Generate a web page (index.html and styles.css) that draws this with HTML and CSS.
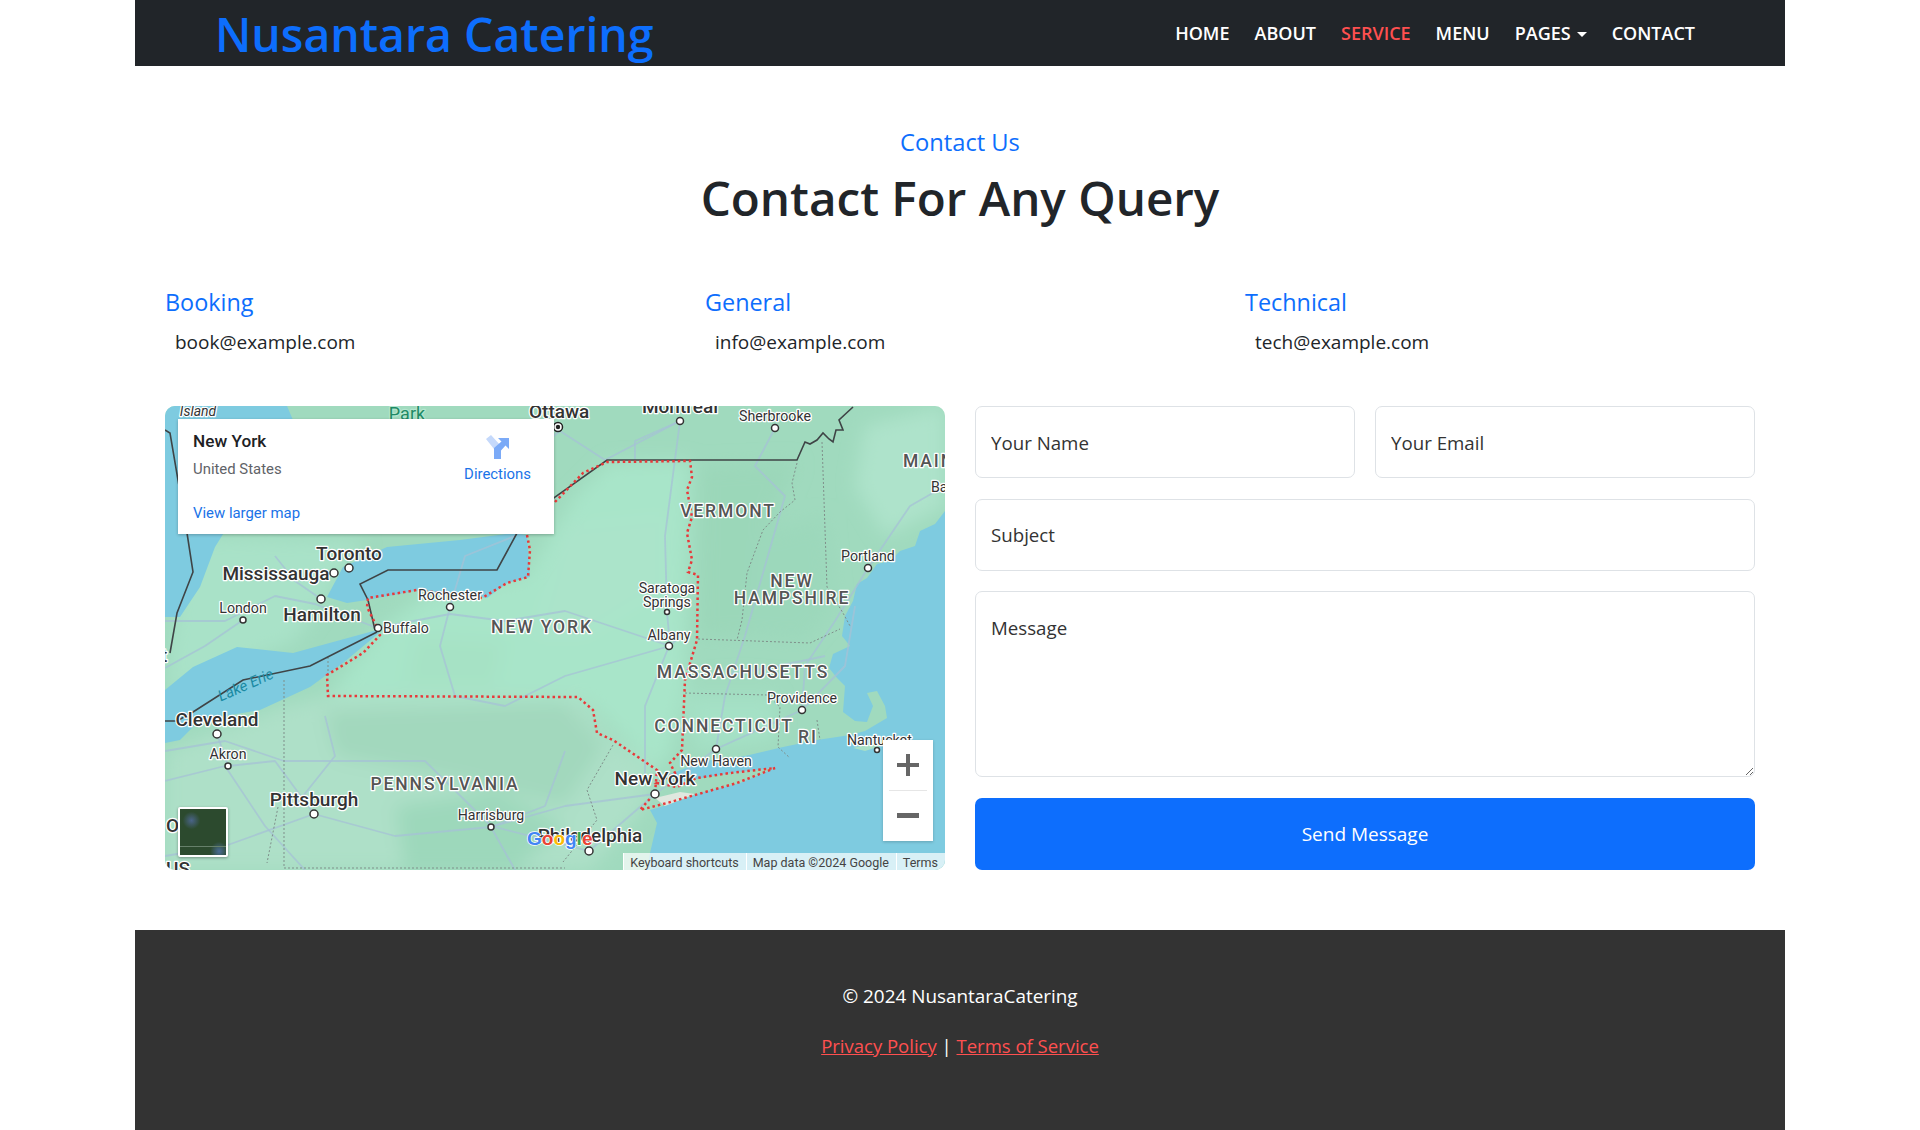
FILE: index.html
```html
<!DOCTYPE html>
<html lang="en">
<head>
    <meta charset="UTF-8">
    <meta name="viewport" content="width=device-width, initial-scale=1.0">
    <title>Nusantara Catering</title>
    <link rel="stylesheet" href="styles.css">
</head>
<body>
    <div class="page">
        <nav class="navbar">
            <a class="brand" href="#">Nusantara Catering</a>
            <ul class="nav-list">
                <li><a href="#">HOME</a></li>
                <li><a href="#">ABOUT</a></li>
                <li><a class="active" href="#">SERVICE</a></li>
                <li><a href="#">MENU</a></li>
                <li><a class="dropdown" href="#">PAGES</a></li>
                <li><a href="#">CONTACT</a></li>
            </ul>
        </nav>

        <main class="contact">
            <p class="eyebrow">Contact Us</p>
            <h1 class="title">Contact For Any Query</h1>

            <div class="info-grid">
                <div>
                    <h2 class="info-label">Booking</h2>
                    <p class="info-mail">book@example.com</p>
                </div>
                <div>
                    <h2 class="info-label">General</h2>
                    <p class="info-mail">info@example.com</p>
                </div>
                <div>
                    <h2 class="info-label">Technical</h2>
                    <p class="info-mail">tech@example.com</p>
                </div>
            </div>

            <div class="contact-row">
                <div class="map">
                    <svg class="map-canvas" width="780" height="464" viewBox="0 0 780 464">
                        <defs>
                            <filter id="soft" x="-10%" y="-10%" width="120%" height="120%">
                                <feGaussianBlur stdDeviation="9"/>
                            </filter>
                        </defs>

                        <!-- land patches -->
                        <rect width="780" height="464" fill="#a0dabe"/>
                        <g filter="url(#soft)">
                            <polygon fill="#a8e5c9" points="163,290 212,226 260,190 360,170 410,90 445,56 525,55 520,280 505,350 490,365 428,300 413,291"/>
                            <polygon fill="#aee0c8" points="0,345 119,300 163,290 413,291 448,334 490,365 480,400 425,464 0,464"/>
                            <polygon fill="#a2d8bd" points="160,305 400,296 440,340 400,400 300,375 170,350"/>
                            <polygon fill="#9dd8bb" points="230,400 330,385 400,420 350,464 240,464"/>
                            <polygon fill="#9bd7b9" points="535,60 632,56 600,130 580,230 533,233"/>
                            <polygon fill="#9cd8bb" points="590,130 660,110 670,200 640,235 580,230"/>
                            <polygon fill="#a9e2c8" points="20,130 200,135 130,235 0,290"/>
                            <polygon fill="#aee3cb" points="700,20 780,0 780,100 720,130 690,80"/>
                            <polygon fill="#a5e1c6" points="520,290 610,290 612,335 530,345"/>
                            <polygon fill="#abe4ca" points="400,120 500,110 500,180 420,230 370,230"/>
                            <polygon fill="#a6e2c5" points="250,230 340,235 330,280 240,280"/>
                        </g>

                        <!-- water -->
                        <g fill="#7ecbe0">
                            <polygon points="0,0 122,0 128,14 140,60 60,125 50,141 35,181 15,211 0,211"/>
                            <polygon points="162,191 178,161 222,141 295,134 348,127 362,129 365,171 342,177 322,192 255,184 202,194 182,197"/>
                            <polygon points="212,224 128,247 72,241 28,261 0,284 0,337 15,334 35,314 95,304 145,281 178,257 214,227"/>
                            <polygon points="780,105 770,118 755,125 750,140 735,145 725,155 712,158 702,172 692,178 688,195 680,210 677,230 685,240 668,248 664,262 672,272 680,280 678,306 690,315 702,316 708,300 702,287 712,285 720,300 722,312 700,325 685,329 652,334 618,341 580,350 540,355 505,368 515,376 572,366 610,362 575,377 535,387 502,399 485,404 492,417 485,447 482,464 780,464"/>
                        </g>
                        <polygon fill="#a8e0c6" points="688,342 716,334 722,338 700,345"/>
                        <polygon fill="#dfe8df" points="490,392 515,386 530,388 500,400"/>

                        <!-- roads -->
                        <g class="roads">
                            <polyline points="0,215 60,215 110,190 150,198 212,222 285,208 340,215 400,205 505,240 520,225"/>
                            <polyline points="0,345 60,335 119,355 260,355 326,420 424,445 490,388"/>
                            <polyline points="149,408 110,355 63,360 52,328"/>
                            <polyline points="149,408 60,440 0,450"/>
                            <polyline points="149,408 230,430 326,421 400,400 490,388"/>
                            <polyline points="285,201 275,240 290,290 340,300 400,270 505,240 502,206 500,130 515,15"/>
                            <polyline points="515,15 440,54 395,25 350,60"/>
                            <polyline points="610,22 590,60 620,90 600,160 580,230 560,290 551,343"/>
                            <polyline points="703,162 670,215 640,260 637,304 551,343 490,388"/>
                            <polyline points="504,240 480,300 480,370"/>
                            <polyline points="0,375 60,360 100,420 140,464"/>
                            <polyline points="326,421 350,464"/>
                            <polyline points="703,162 745,100 780,80"/>
                            <polyline points="560,270 637,255 660,250"/>
                            <polyline points="78,214 40,240 0,262"/>
                            <polyline points="156,193 130,175 110,150"/>
                            <polyline points="285,201 300,150 350,130"/>
                            <polyline points="515,15 470,35 470,54"/>
                            <polyline points="160,310 170,350 130,400"/>
                            <polyline points="400,345 380,400 326,421"/>
                            <polyline points="637,304 680,260 690,200"/>
                        </g>

                        <!-- state lines -->
                        <g class="state-lines">
                            <polyline points="119,274 119,462 400,462"/>
                            <polyline points="163,251 163,269"/>
                            <polyline points="657,36 662,181 678,207 685,220"/>
                            <polyline points="632,57 627,77 630,94 615,106 598,124 582,167 577,214 572,234"/>
                            <polyline points="533,233 645,237 675,223"/>
                            <polyline points="520,287 602,289 615,301 613,341 625,352"/>
                            <polyline points="652,314 655,334"/>
                            <polyline points="448,339 422,384 432,414 398,456"/>
                            <polyline points="113,401 102,457"/>
                        </g>

                        <!-- country border -->
                        <g class="border-line">
                            <polyline points="0,24 5,27 22,127 28,166 12,207 5,247"/>
                            <polyline points="212,226 145,260 78,274 28,306 12,315 0,315"/>
                            <polyline points="210,224 203,194 195,178 223,164 332,164 352,127 390,91 442,54 632,54 640,36 645,38 652,34 658,27 664,33 668,36 671,24 678,24 674,14 688,1"/>
                        </g>

                        <!-- New York state outline -->
                        <polyline class="ny-line" points="362,129 365,144 363,171 342,177 317,192 252,184 203,192 202,201 212,221 215,229 198,247 162,269 163,290 413,291 428,304 432,327 448,334 492,364 490,387 475,404 502,397 572,377 610,362 592,364 565,367 532,372 512,381 492,377 510,367 505,357 517,344 520,274 532,234 533,169 523,166 527,154 522,127 527,111 522,84 527,71 525,55 442,56 418,67 390,96"/>

                        <!-- labels -->
                        <text class="lbl-sea" x="33" y="10">Island</text>
                        <text class="lbl-park" x="242" y="14">Park</text>
                        <text class="lbl-big" x="364" y="12" text-anchor="start">Ottawa</text>
                        <text class="lbl-big" x="515" y="7">Montreal</text>
                        <text class="lbl-small" x="610" y="15">Sherbrooke</text>
                        <text class="lbl-state" x="738" y="61" text-anchor="start">MAINE</text>
                        <text class="lbl-small" x="766" y="86" text-anchor="start">Bangor</text>
                        <text class="lbl-state" x="563" y="111">VERMONT</text>
                        <text class="lbl-small" x="703" y="155">Portland</text>
                        <text class="lbl-state" x="627" y="181">NEW</text>
                        <text class="lbl-state" x="627" y="198">HAMPSHIRE</text>
                        <text class="lbl-small" x="502" y="187">Saratoga</text>
                        <text class="lbl-small" x="502" y="201">Springs</text>
                        <text class="lbl-small" x="504" y="234">Albany</text>
                        <text class="lbl-state" x="578" y="272">MASSACHUSETTS</text>
                        <text class="lbl-small" x="637" y="297">Providence</text>
                        <text class="lbl-state" x="559" y="326">CONNECTICUT</text>
                        <text class="lbl-state" x="643" y="337">RI</text>
                        <text class="lbl-small" x="682" y="339" text-anchor="start">Nantucket</text>
                        <text class="lbl-small" x="551" y="360">New Haven</text>
                        <text class="lbl-big" x="490" y="379">New York</text>
                        <text class="lbl-big" x="425" y="436">Philadelphia</text>
                        <text class="lbl-big" x="184" y="154">Toronto</text>
                        <text class="lbl-big" x="111" y="174">Mississauga</text>
                        <text class="lbl-small" x="78" y="207">London</text>
                        <text class="lbl-big" x="157" y="215">Hamilton</text>
                        <text class="lbl-small" x="218" y="227" text-anchor="start">Buffalo</text>
                        <text class="lbl-small" x="285" y="194">Rochester</text>
                        <text class="lbl-state" x="377" y="227">NEW YORK</text>
                        <text class="lbl-lake" x="81" y="284" transform="rotate(-24 81 280)">Lake Erie</text>
                        <text class="lbl-big" x="52" y="320">Cleveland</text>
                        <text class="lbl-small" x="63" y="353">Akron</text>
                        <text class="lbl-big" x="149" y="400">Pittsburgh</text>
                        <text class="lbl-state" x="280" y="384">PENNSYLVANIA</text>
                        <text class="lbl-small" x="326" y="414">Harrisburg</text>
                        <text class="lbl-big" x="-4" y="256" text-anchor="start">t</text>
                        <text class="lbl-big" x="1" y="426" text-anchor="start">O</text>
                        <text class="lbl-big" x="1" y="469" text-anchor="start">US</text>

                        <!-- city dots -->
                        <g class="dots">
                            <circle cx="515" cy="15" r="3.5"/>
                            <circle cx="610" cy="22" r="3.5"/>
                            <circle cx="703" cy="162" r="3.5"/>
                            <circle cx="502" cy="206" r="2.5"/>
                            <circle cx="504" cy="240" r="3.5"/>
                            <circle cx="637" cy="304" r="3.5"/>
                            <circle cx="712" cy="344" r="2.5"/>
                            <circle cx="551" cy="343" r="3.5"/>
                            <circle cx="490" cy="388" r="4"/>
                            <circle cx="424" cy="445" r="4"/>
                            <circle cx="184" cy="162" r="4"/>
                            <circle cx="169" cy="167" r="4"/>
                            <circle cx="78" cy="214" r="3"/>
                            <circle cx="156" cy="193" r="4"/>
                            <circle cx="213" cy="222" r="3.5"/>
                            <circle cx="285" cy="201" r="3.5"/>
                            <circle cx="52" cy="328" r="4"/>
                            <circle cx="63" cy="360" r="3"/>
                            <circle cx="149" cy="408" r="4"/>
                            <circle cx="326" cy="421" r="3"/>
                        </g>
                        <circle cx="393" cy="21" r="4.5" fill="#fff" stroke="#222" stroke-width="1.5"/>
                        <circle cx="393" cy="21" r="2.2" fill="#222"/>

                        <text class="lbl-google" x="362" y="439"><tspan fill="#4285f4">G</tspan><tspan fill="#ea4335">o</tspan><tspan fill="#fbbc05">o</tspan><tspan fill="#4285f4">g</tspan><tspan fill="#34a853">l</tspan><tspan fill="#ea4335">e</tspan></text>
                    </svg>

                    <div class="map-card">
                        <div>
                            <p class="place-name">New York</p>
                            <p class="place-sub">United States</p>
                            <a class="place-link" href="#">View larger map</a>
                        </div>
                        <a class="directions" href="#">
                            <svg width="24" height="24" viewBox="0 0 24 24">
                                <path fill="#c5d9fb" d="M0 4 L5 0 L15 11 V17 H8 V14 Z"/>
                                <path fill="#7baaf7" d="M8 24 V13 L15.5 6.5 L12 3 H23 V14 L19.5 10.5 L15 15.5 V24 Z"/>
                            </svg>
                            <span>Directions</span>
                        </a>
                    </div>

                    <div class="map-thumb"></div>

                    <div class="zoom-box">
                        <svg width="50" height="50" viewBox="0 0 50 50"><path fill="#666" d="M14 23 H23 V14 H27 V23 H36 V27 H27 V36 H23 V27 H14 Z"/></svg>
                        <div class="zoom-sep"></div>
                        <svg width="50" height="50" viewBox="0 0 50 50"><rect x="14" y="22" width="22" height="5" fill="#666"/></svg>
                    </div>

                    <div class="attribution">
                        <span>Keyboard shortcuts</span>
                        <span>Map data ©2024 Google</span>
                        <span>Terms</span>
                    </div>
                </div>

                <form class="contact-form">
                    <div class="form-pair">
                        <input class="field" type="text" placeholder="Your Name">
                        <input class="field" type="email" placeholder="Your Email">
                    </div>
                    <input class="field" type="text" placeholder="Subject">
                    <textarea class="field field-area" placeholder="Message"></textarea>
                    <button class="send-btn" type="button">Send Message</button>
                </form>
            </div>
        </main>

        <footer class="footer">
            <p>© 2024 NusantaraCatering</p>
            <p class="footer-links"><a href="#">Privacy Policy</a> | <a href="#">Terms of Service</a></p>
        </footer>
    </div>
</body>
</html>
```

FILE: styles.css
```css
* {
    box-sizing: border-box;
}

body {
    margin: 0;
    background: #fff;
    color: #212529;
    font-family: "Open Sans", "Liberation Sans", sans-serif;
    font-size: 18px;
}

p, h1, h2, ul {
    margin: 0;
    padding: 0;
}

a {
    text-decoration: none;
}

.page {
    width: 1650px;
    margin: 0 auto;
}

/* Navbar */
.navbar {
    height: 66px;
    background: #212529;
    display: flex;
    align-items: center;
    justify-content: space-between;
    padding: 0 90px 0 80px;
}

.brand {
    padding-top: 2px;
    color: #0d6efd;
    font-size: 46.4px;
    font-weight: 600;
    line-height: 66px;
    white-space: nowrap;
}

.nav-list {
    list-style: none;
    display: flex;
    gap: 25px;
}

.nav-list a {
    color: #fff;
    font-size: 18px;
    font-weight: 600;
}

.nav-list a.active {
    color: #ff5050;
}

.dropdown::after {
    content: "";
    display: inline-block;
    margin-left: 6px;
    vertical-align: 3px;
    border-top: 5px solid #fff;
    border-left: 5px solid transparent;
    border-right: 5px solid transparent;
}

/* Contact section */
.contact {
    height: 864px;
    padding: 59px 0 0 30px;
}

.eyebrow {
    margin-right: 30px;
    color: #0d6efd;
    font-size: 23.7px;
    line-height: 34px;
    text-align: center;
}

.title {
    margin: 10px 30px 0 0;
    font-size: 47.6px;
    font-weight: 600;
    line-height: 58px;
    text-align: center;
}

.info-grid {
    display: grid;
    grid-template-columns: repeat(3, 540px);
    margin-top: 58px;
}

.info-label {
    color: #0d6efd;
    font-size: 23.4px;
    font-weight: 400;
    line-height: 34px;
}

.info-mail {
    margin-top: 7px;
    padding-left: 10px;
    font-size: 19px;
    line-height: 32px;
}

.contact-row {
    display: grid;
    grid-template-columns: 780px 780px;
    gap: 30px;
    margin-top: 48px;
}

/* Map */
.map {
    position: relative;
    height: 464px;
    overflow: hidden;
    border-radius: 10px;
    font-family: Roboto, "Liberation Sans", sans-serif;
}

.map-canvas {
    display: block;
}

.map-canvas text {
    text-anchor: middle;
    font-family: Roboto, "Liberation Sans", sans-serif;
    paint-order: stroke;
    stroke: #fff;
    stroke-width: 2.5px;
    stroke-linejoin: round;
    fill: #333;
}

.map-canvas text[text-anchor="start"] {
    text-anchor: start;
}

.map-canvas .lbl-big {
    font-size: 19px;
    font-weight: 500;
}

.map-canvas .lbl-small {
    font-size: 14.2px;
    font-weight: 400;
}

.map-canvas .lbl-state {
    font-size: 17.5px;
    font-weight: 500;
    letter-spacing: 1.9px;
    fill: #555;
}

.map-canvas .lbl-sea {
    font-size: 14px;
    font-style: italic;
}

.map-canvas .lbl-park {
    font-size: 18px;
    fill: #1f8a66;
    stroke: #b4e6cf;
}

.map-canvas .lbl-lake {
    font-size: 15px;
    font-style: italic;
    fill: #1b8aa3;
    stroke: none;
}

.map-canvas .lbl-google {
    font-family: "Liberation Sans", sans-serif;
    font-size: 19px;
    font-weight: 700;
    text-anchor: start;
    stroke-width: 1.5px;
}

.roads polyline {
    fill: none;
    stroke: #a5c2d6;
    stroke-width: 1.8;
    stroke-linejoin: round;
    stroke-opacity: 0.75;
}

.state-lines polyline {
    fill: none;
    stroke: #7f8f8a;
    stroke-width: 1;
    stroke-dasharray: 2 2;
}

.border-line polyline {
    fill: none;
    stroke: #3f4446;
    stroke-width: 1.6;
}

.ny-line {
    fill: none;
    stroke: #e8393a;
    stroke-width: 2.5;
    stroke-dasharray: 2.5 3;
}

.dots circle {
    fill: #fff;
    stroke: #333;
    stroke-width: 1.5;
}

.map-card {
    position: absolute;
    top: 13px;
    left: 13px;
    width: 376px;
    height: 115px;
    padding: 12px 23px 0 15px;
    background: #fff;
    display: flex;
    justify-content: space-between;
    box-shadow: 0 1px 3px rgba(0, 0, 0, 0.25);
}

.place-name {
    color: #202124;
    font-size: 17.2px;
    font-weight: 500;
    line-height: 21px;
}

.place-sub {
    margin-top: 7px;
    color: #5f6368;
    font-size: 14.9px;
    line-height: 20px;
}

.place-link {
    display: block;
    margin-top: 24px;
    color: #1a73e8;
    font-size: 14.9px;
    line-height: 20px;
}

.directions {
    display: flex;
    flex-direction: column;
    align-items: center;
    gap: 5px;
    margin-top: 4px;
    color: #1a73e8;
    font-size: 14.9px;
    line-height: 20px;
}

.map-thumb {
    position: absolute;
    left: 13px;
    top: 401px;
    width: 50px;
    height: 50px;
    border: 2px solid #fff;
    border-radius: 2px;
    background:
        linear-gradient(transparent 81%, #66806a 81%, #66806a 83%, transparent 83%),
        radial-gradient(ellipse at 25% 25%, #4a6488 0, transparent 18%),
        radial-gradient(ellipse at 85% 92%, #4a6c95 0, transparent 16%),
        #2c4a2e;
    box-shadow: 0 1px 3px rgba(0, 0, 0, 0.35);
}

.zoom-box {
    position: absolute;
    left: 718px;
    top: 334px;
    width: 50px;
    height: 101px;
    background: #fff;
    box-shadow: 0 1px 3px rgba(0, 0, 0, 0.2);
}

.zoom-box svg {
    display: block;
}

.zoom-sep {
    height: 1px;
    margin: 0 6px;
    background: #e6e6e6;
}

.attribution {
    position: absolute;
    right: 0;
    bottom: 0;
    height: 17px;
    display: flex;
    color: #444;
    font-size: 12.5px;
    line-height: 19px;
    background: rgba(255, 255, 255, 0.7);
}

.attribution span {
    padding: 0 7px 0 6px;
    border-left: 1px solid #fff;
}

/* Form */
.contact-form {
    display: flex;
    flex-direction: column;
    gap: 20.33px;
    height: 464px;
}

.form-pair {
    display: grid;
    grid-template-columns: 1fr 1fr;
    gap: 20px;
}

.field {
    width: 100%;
    height: 72.3px;
    padding: 0 15px;
    border: 1px solid #dee2e6;
    border-radius: 7px;
    color: #212529;
    font-family: inherit;
    font-size: 18.7px;
    background: #fff;
}

.field::placeholder {
    color: #333;
    opacity: 1;
}

.field-area {
    height: 186px;
    padding-top: 23px;
}

.send-btn {
    height: 72.3px;
    padding-top: 2px;
    border: none;
    border-radius: 7px;
    background: #0d6efd;
    color: #fff;
    font-family: inherit;
    font-size: 19px;
}

/* Footer */
.footer {
    height: 200px;
    padding-top: 50px;
    background: #333;
    color: #fff;
    font-size: 18.9px;
    line-height: 32px;
    text-align: center;
}

.footer-links {
    margin-top: 18px;
    font-size: 18.5px;
}

.footer-links a {
    color: #ff5050;
    text-decoration: underline;
}
```
